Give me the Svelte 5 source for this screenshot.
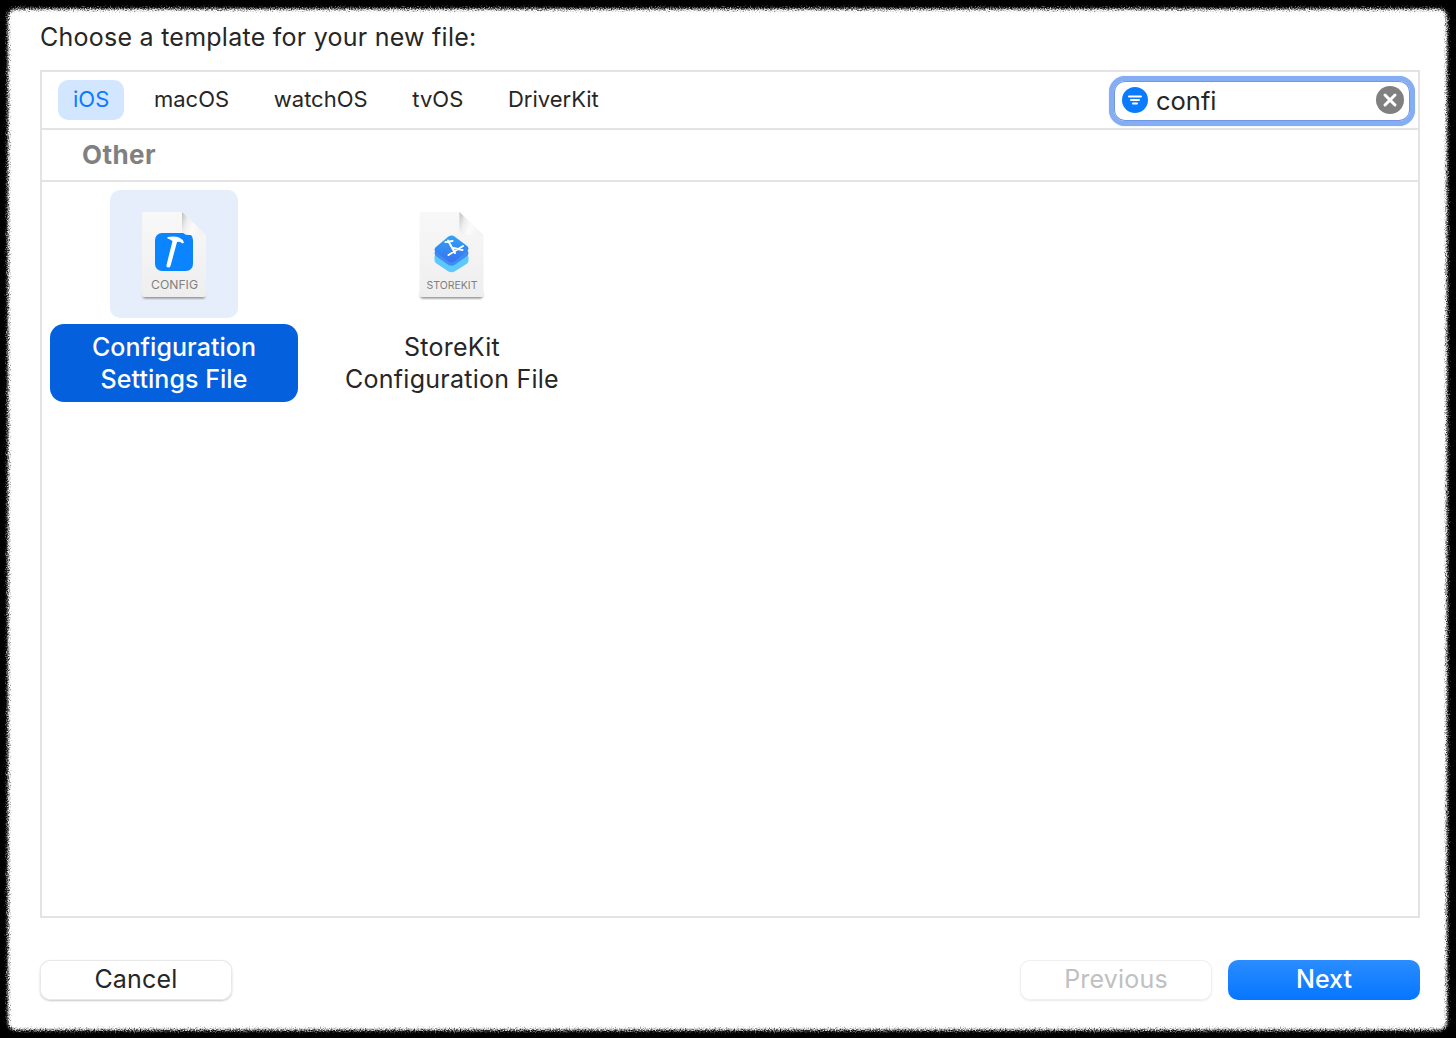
<script>
  const tabs = ['iOS', 'macOS', 'watchOS', 'tvOS', 'DriverKit'];
</script>

<svg class="defs" width="0" height="0" aria-hidden="true">
  <defs>
    <filter id="rough" x="-2%" y="-2%" width="104%" height="104%">
      <feGaussianBlur in="SourceGraphic" stdDeviation="1.6" result="b" />
      <feTurbulence type="fractalNoise" baseFrequency="0.8" numOctaves="2" seed="4" result="n" />
      <feDisplacementMap in="b" in2="n" scale="7" xChannelSelector="R" yChannelSelector="G" />
    </filter>
    <filter id="soft" x="-20%" y="-20%" width="140%" height="140%">
      <feGaussianBlur stdDeviation="1" />
    </filter>
    <linearGradient id="page" x1="0" y1="0" x2="0" y2="1">
      <stop offset="0" stop-color="#f8f8f8" />
      <stop offset="1" stop-color="#eeeeee" />
    </linearGradient>
    <linearGradient id="fold" x1="0" y1="0" x2="1" y2="0.35">
      <stop offset="0" stop-color="#bdbdbd" />
      <stop offset="0.3" stop-color="#ededed" />
      <stop offset="0.6" stop-color="#fbfbfb" />
      <stop offset="1" stop-color="#f3f3f3" />
    </linearGradient>
    <linearGradient id="kit" x1="0" y1="0" x2="0" y2="1">
      <stop offset="0" stop-color="#2fa4f7" />
      <stop offset="1" stop-color="#3a70ee" />
    </linearGradient>
  </defs>
</svg>

<div class="stage">
  <div class="edge"></div>
  <main class="sheet">
    <h1>Choose a template for your new file:</h1>

    <section class="panel">
      <header class="toolbar">
        <nav class="tabs">
          {#each tabs as tab, i}
            <span class="tab" class:active={i === 0}>{tab}</span>
          {/each}
        </nav>
        <div class="search">
          <svg class="filter" width="26" height="26" viewBox="0 0 26 26">
            <circle cx="13" cy="13" r="13" fill="#0a7bff" />
            <path d="M7 9.500h12M9 13h8M11 16.500h4" stroke="#fff" stroke-width="2" stroke-linecap="round" />
          </svg>
          <span class="query">confi</span>
          <svg class="clear" width="28" height="28" viewBox="0 0 28 28">
            <circle cx="14" cy="14" r="14" fill="#808080" />
            <path d="M9 9l10 10M19 9L9 19" stroke="#fff" stroke-width="3" stroke-linecap="round" />
          </svg>
        </div>
      </header>

      <div class="section">Other</div>

      <div class="grid">
        <article class="item selected">
          <div class="thumb">
            <svg width="70" height="92" viewBox="0 0 70 92">
              <path d="M4 84h62v3.500a2 2 0 0 1-2 2H6a2 2 0 0 1-2-2z" fill="#8c8c8c" filter="url(#soft)" />
              <path d="M3 5a2 2 0 0 1 2-2h38l24 23v60a2 2 0 0 1-2 2H5a2 2 0 0 1-2-2z" fill="url(#page)" />
              <rect x="16" y="24" width="38" height="38" rx="7" fill="#0a84ff" />
              <path d="M43 3l24 23H50q-7 0-7-6z" fill="url(#fold)" />
              <path d="M28.500 28Q36 26.800 40 28.500 43.500 30 45 33.500L43.500 34.500Q41 32 38 33L31.500 57Q30.500 59 28.800 58.500 27 57.800 27.500 56L33.500 32Q31 30 28.500 29.500Z" fill="#fff" />
              <text x="35.500" y="80" class="label">CONFIG</text>
            </svg>
          </div>
          <div class="name">Configuration<br />Settings File</div>
        </article>

        <article class="item">
          <div class="thumb">
            <svg width="70" height="92" viewBox="0.500 0 70 92">
              <path d="M4 84h62v3.500a2 2 0 0 1-2 2H6a2 2 0 0 1-2-2z" fill="#8c8c8c" filter="url(#soft)" />
              <path d="M3 5a2 2 0 0 1 2-2h38l24 23v60a2 2 0 0 1-2 2H5a2 2 0 0 1-2-2z" fill="url(#page)" />
              <path d="M43 3l24 23H50q-7 0-7-6z" fill="url(#fold)" />
              <path d="M32 36.500q3-2 6 0l12 8.500q2 1.500 2 3.500v3q0 2-2 3.500L38 62.500q-3 1.500-6 0L20 54.500q-2-1.500-2-3.500v-3q0-2 2-3.500z" fill="#5cc8fb" />
              <path d="M32 32q3-2 6 0l12 8.500q2 1.500 2 3.500t-2 3.500L38 56q-3 1.500-6 0L20 47.500q-2-1.500-2-3.500t2-3.500z" fill="#3f8df2" />
              <path d="M32 27.500q3-1.800 6 0l12 9q2 1.500 2 3t-2 3L38 52.500q-3 1.800-6 0l-12-9q-2-1.500-2-3t2-3z" fill="url(#kit)" />
              <path d="M31.500 31.500l7 12.500M46.500 37L32 46M29 33l7-1M37 39l9 2" stroke="#fff" stroke-width="2" stroke-linecap="round" fill="none" />
              <text x="35.500" y="80" class="label small">STOREKIT</text>
            </svg>
          </div>
          <div class="name">StoreKit<br />Configuration File</div>
        </article>
      </div>
    </section>

    <footer class="actions">
      <button class="btn">Cancel</button>
      <div class="right">
        <button class="btn disabled">Previous</button>
        <button class="btn primary">Next</button>
      </div>
    </footer>
  </main>
</div>

<style>
  :global(body) {
    margin: 0;
    background: #000;
  }
  .defs {
    position: absolute;
  }
  .stage {
    position: relative;
    width: 1456px;
    height: 1038px;
    overflow: hidden;
    background: #000;
    font-family: Inter, "Liberation Sans", sans-serif;
  }
  .edge {
    position: absolute;
    left: 8px;
    top: 9px;
    width: 1439px;
    height: 1021px;
    background: #fff;
    border-radius: 8px;
    filter: url(#rough);
  }
  .sheet {
    position: relative;
    box-sizing: border-box;
    height: 100%;
    padding: 22px 36px 38px 40px;
    display: flex;
    flex-direction: column;
  }
  h1 {
    margin: 0 0 18px;
    font-size: 25px;
    line-height: 30px;
    font-weight: 400;
    letter-spacing: .25px;
    color: #262626;
  }
  .panel {
    box-sizing: border-box;
    height: 848px;
    border: 2px solid #e3e3e3;
    display: flex;
    flex-direction: column;
  }
  .toolbar {
    box-sizing: border-box;
    height: 58px;
    border-bottom: 2px solid #e3e3e3;
    display: flex;
    align-items: center;
    justify-content: space-between;
    padding: 0 3px 0 16px;
  }
  .tabs {
    display: flex;
    gap: 14.700px;
  }
  .tab {
    height: 40px;
    padding: 0 15px;
    border-radius: 10px;
    font-size: 22px;
    line-height: 38px;
    color: #262626;
  }
  .tab.active {
    background: #d3e6ff;
    color: #0a7bff;
  }
  .search {
    box-sizing: border-box;
    width: 306px;
    height: 50px;
    margin-top: 1px;
    border-radius: 16px;
    background: #fff;
    border: 5px solid #85adf3;
    box-shadow: inset 0 0 0 1px #6f97e6, 0 0 1px #85adf3;
    display: flex;
    align-items: center;
    padding: 0 6px 1px 8px;
  }
  .query {
    flex: 1;
    margin-left: 8px;
    font-size: 25.500px;
    color: #262626;
  }
  .section {
    box-sizing: border-box;
    height: 52px;
    padding-left: 40px;
    border-bottom: 2px solid #e3e3e3;
    font-size: 26px;
    line-height: 50px;
    font-weight: 700;
    letter-spacing: .4px;
    color: #808080;
  }
  .grid {
    display: flex;
    padding: 8px 0 0;
    gap: 14px;
  }
  .item {
    width: 264px;
    display: flex;
    flex-direction: column;
    align-items: center;
  }
  .thumb {
    width: 128px;
    height: 128px;
    padding-top: 2px;
    box-sizing: border-box;
    border-radius: 10px;
    display: flex;
    align-items: center;
    justify-content: center;
  }
  .selected .thumb {
    background: #e6eefb;
  }
  .name {
    box-sizing: border-box;
    margin-top: 6px;
    padding: 7px 8px;
    width: 100%;
    min-height: 78px;
    border-radius: 14px;
    text-align: center;
    font-size: 25px;
    line-height: 32px;
    letter-spacing: .25px;
    color: #262626;
  }
  .selected .name {
    width: 248px;
    background: #0460dc;
    color: #fff;
    font-weight: 500;
    letter-spacing: .05px;
  }
  .label {
    font-family: Inter, "Liberation Sans", sans-serif;
    font-size: 12.200px;
    fill: #808080;
    text-anchor: middle;
  }
  .label.small {
    font-size: 10.500px;
  }
  .actions {
    margin-top: auto;
    display: flex;
    justify-content: space-between;
  }
  .right {
    display: flex;
    gap: 16px;
  }
  .btn {
    box-sizing: border-box;
    width: 192px;
    height: 40px;
    border: 0;
    padding: 0 0 2px;
    border-radius: 10px;
    background: #fff;
    box-shadow: inset 0 0 0 1px #e8e8e8, 0 1px 2px rgba(0, 0, 0, .22);
    font-family: inherit;
    font-size: 25px;
    letter-spacing: .2px;
    color: #262626;
  }
  .btn.disabled {
    color: #c0c0c0;
    box-shadow: inset 0 0 0 1px #f0f0f0, 0 1px 2px rgba(0, 0, 0, .09);
  }
  .btn.primary {
    color: #fff;
    font-weight: 500;
    letter-spacing: 0;
    background: linear-gradient(#2b8dff, #0576ff);
    box-shadow: none;
  }
</style>
